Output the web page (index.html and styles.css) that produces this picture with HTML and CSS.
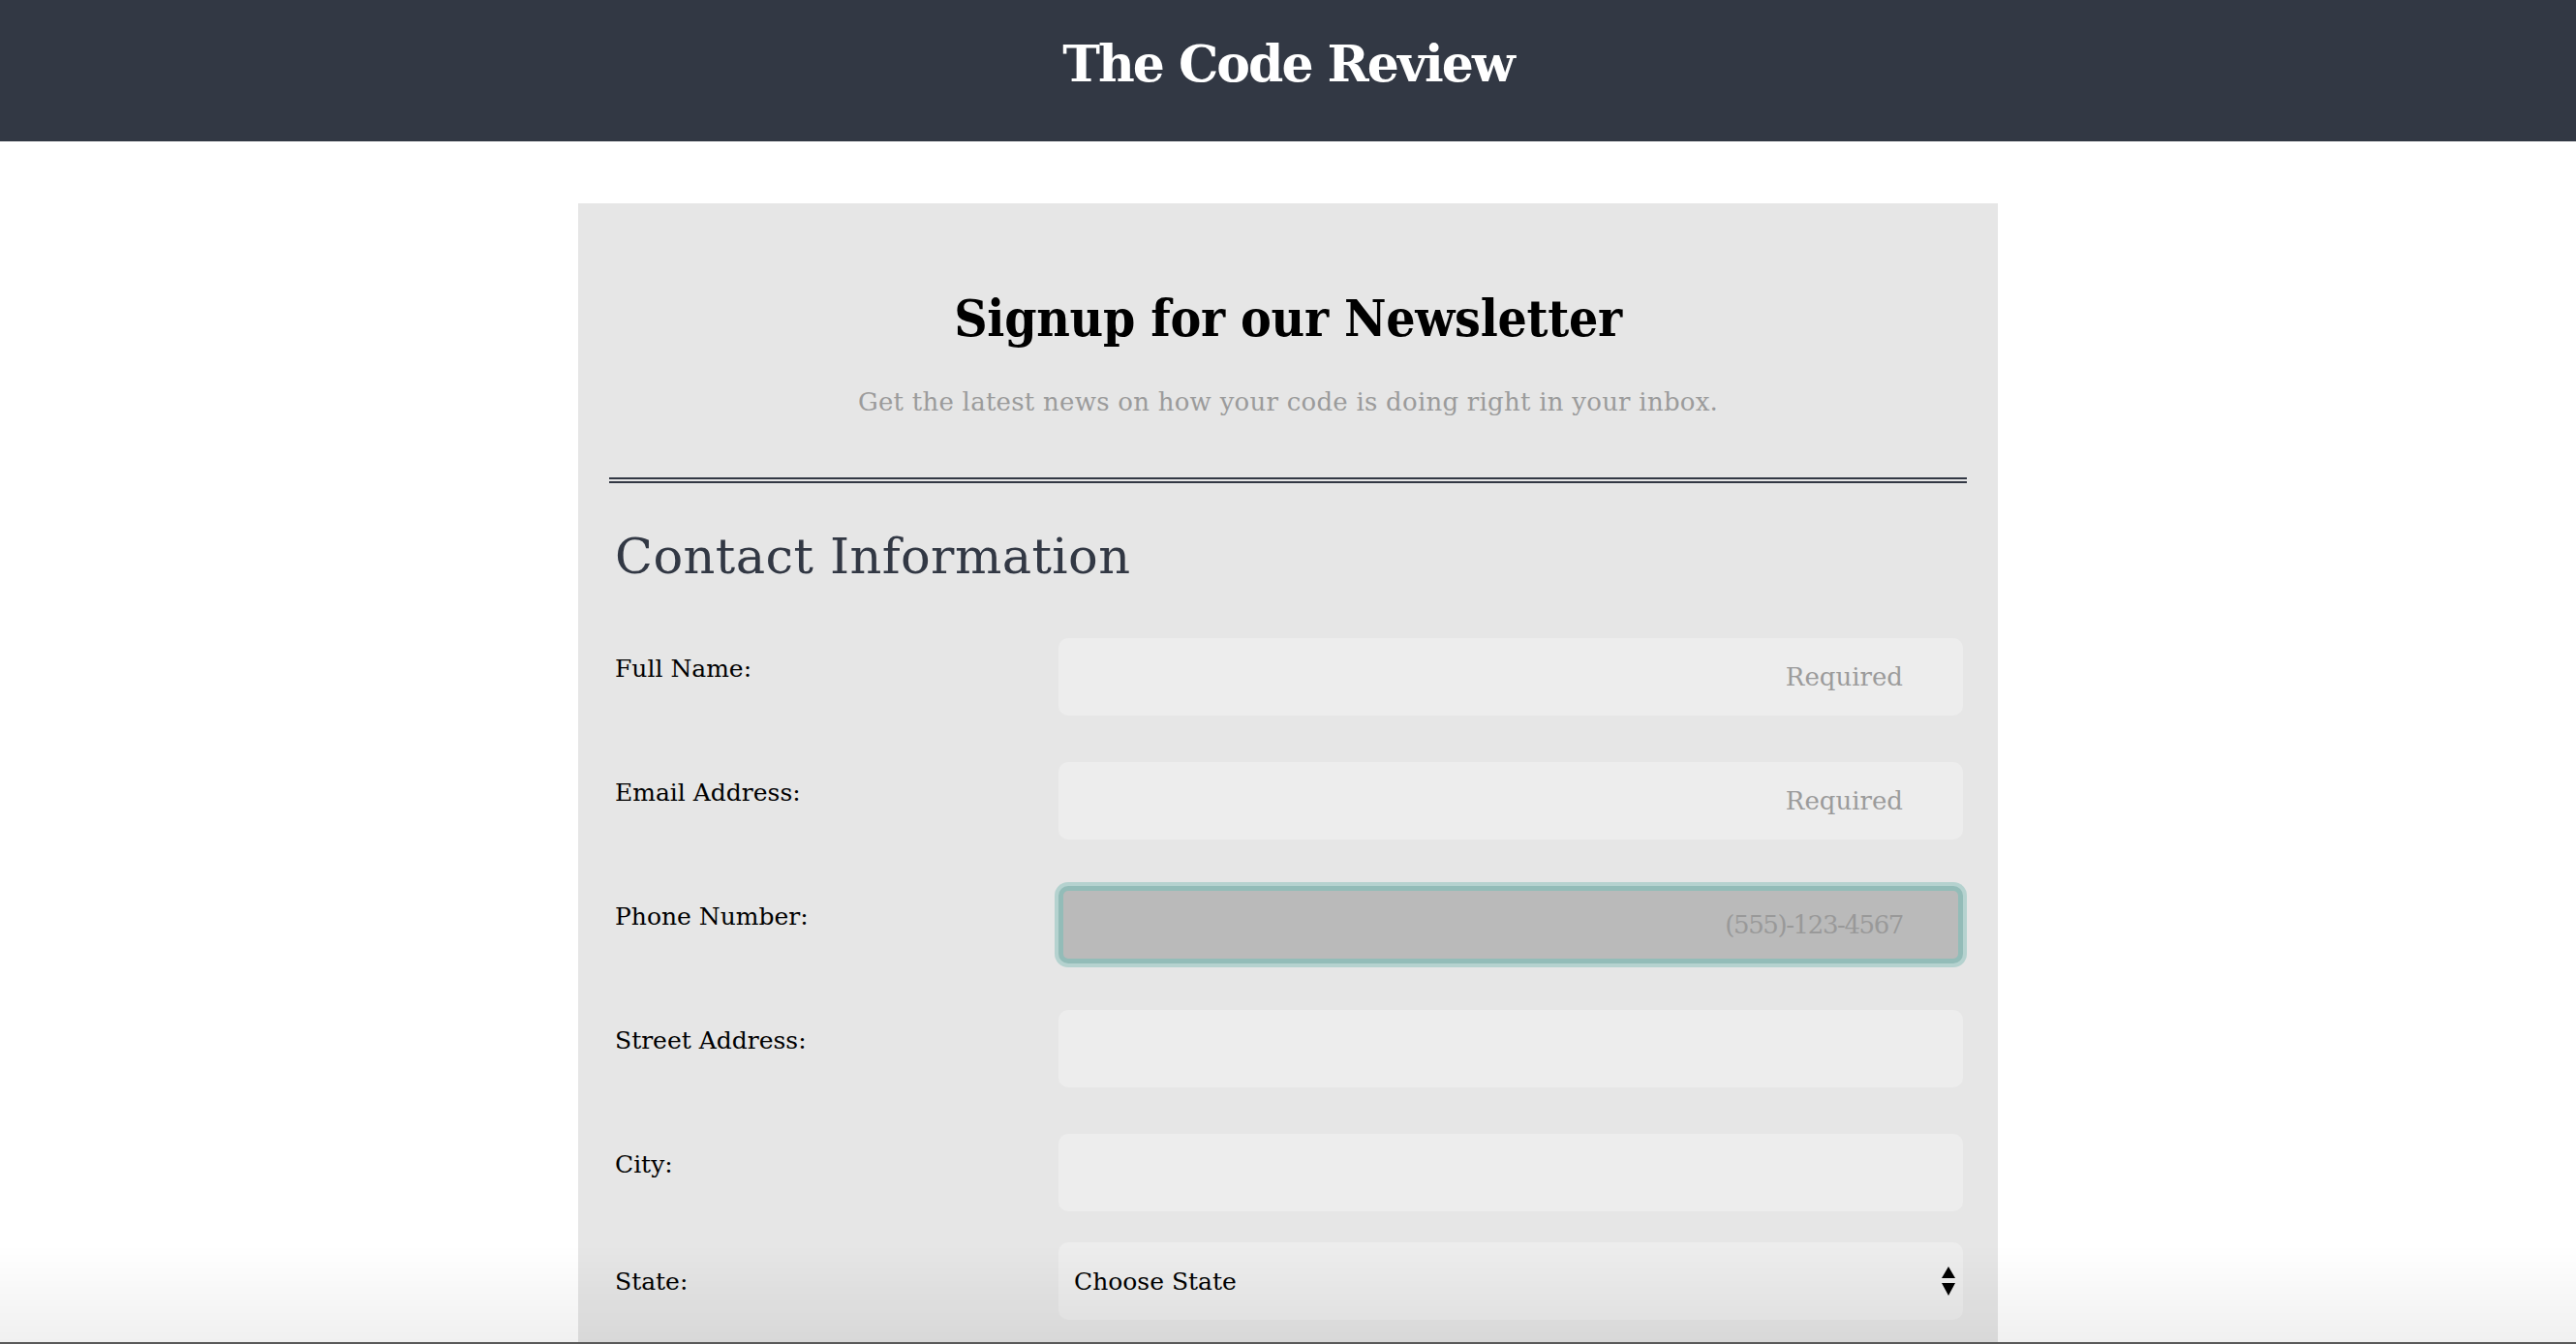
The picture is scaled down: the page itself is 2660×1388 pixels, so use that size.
FILE: index.html
```html
<!DOCTYPE html>
<html lang="en">
<head>
<meta charset="utf-8">
<title>The Code Review</title>
<link rel="stylesheet" href="styles.css">
</head>
<body>
<header class="site-header">
  <h1 class="site-title">The Code Review</h1>
</header>
<main class="card">
  <div class="intro">
    <h2 class="intro-title">Signup for our Newsletter</h2>
    <p class="intro-text">Get the latest news on how your code is doing right in your inbox.</p>
  </div>
  <hr class="divider">
  <form class="form">
    <h3 class="section-title">Contact Information</h3>
    <div class="fields">
      <div class="field">
        <label class="field-label" for="name">Full Name:</label>
        <input class="field-input" id="name" type="text" placeholder="Required">
      </div>
      <div class="field">
        <label class="field-label" for="email">Email Address:</label>
        <input class="field-input" id="email" type="email" placeholder="Required">
      </div>
      <div class="field">
        <label class="field-label" for="phone">Phone Number:</label>
        <input class="field-input is-focused" id="phone" type="tel" placeholder="(555)-123-4567">
      </div>
      <div class="field">
        <label class="field-label" for="street">Street Address:</label>
        <input class="field-input" id="street" type="text">
      </div>
      <div class="field">
        <label class="field-label" for="city">City:</label>
        <input class="field-input" id="city" type="text">
      </div>
      <div class="field field--select">
        <label class="field-label field-label--select" for="state">State:</label>
        <div class="select-wrap">
          <select class="field-select" id="state">
            <option>Choose State</option>
          </select>
          <svg class="select-arrows" viewBox="0 0 14 30" aria-hidden="true">
            <polygon points="7,0 14,12 0,12" fill="#000"/>
            <polygon points="0,17 14,17 7,30" fill="#000"/>
          </svg>
        </div>
      </div>
    </div>
  </form>
</main>
<div class="bottom-shade"></div>
</body>
</html>
```
FILE: styles.css
```css
html, body {
  margin: 0;
  padding: 0;
  background: #ffffff;
  font-family: "DejaVu Serif", "Liberation Serif", serif;
}

.site-header {
  box-sizing: border-box;
  height: 146px;
  padding-top: 40px;
  background: #323844;
  text-align: center;
}

.site-title {
  margin: 0;
  font-size: 52px;
  line-height: 52px;
  font-weight: bold;
  letter-spacing: -2px;
  color: #ffffff;
}

.card {
  box-sizing: border-box;
  width: 1466px;
  margin: 64px auto 0;
  padding: 92px 32px 300px;
  background: #e6e6e6;
}

.intro {
  text-align: center;
}

.intro-title {
  margin: 0;
  font-family: "DejaVu Serif Condensed", "DejaVu Serif", serif;
  font-size: 53px;
  line-height: 53px;
  font-weight: bold;
  letter-spacing: -0.3px;
  color: #000000;
}

.intro-text {
  margin: 47px 0 0;
  font-size: 26px;
  line-height: 26px;
  letter-spacing: 0.25px;
  color: #9b9b9b;
}

.divider {
  height: 0;
  margin: 65px 0 0;
  border: 0;
  border-top: 6px double #323844;
}

.form {
  padding: 0 4px 0 6px;
}

.section-title {
  margin: 50px 0 0;
  font-size: 51px;
  line-height: 51px;
  font-weight: normal;
  letter-spacing: 0.4px;
  color: #323844;
}

.fields {
  margin-top: 59px;
}

.field {
  display: grid;
  grid-template-columns: 458px 1fr;
}

.field + .field {
  margin-top: 48px;
}

.field.field--select {
  margin-top: 32px;
}

.field-label {
  padding-top: 19px;
  font-size: 25px;
  line-height: 25px;
  color: #000000;
}

.field-label--select {
  padding-top: 28px;
}

.field-input {
  box-sizing: border-box;
  width: 100%;
  height: 80px;
  padding: 0 62px 0 16px;
  border: 0;
  border-radius: 10px;
  background: #ededed;
  font-family: inherit;
  font-size: 26px;
  color: #000000;
  text-align: right;
  outline: none;
}

.field-input::placeholder {
  color: #9b9b9b;
  opacity: 1;
}

.field-input.is-focused {
  padding-right: 57px;
  border: 5px solid #93bcb8;
  background: #bababa;
  box-shadow: 0 0 0 4px #b5d2cf;
  letter-spacing: -1.4px;
}

.field-input.is-focused::placeholder {
  color: #999999;
}

.select-wrap {
  position: relative;
}

.field-select {
  box-sizing: border-box;
  width: 100%;
  height: 80px;
  padding: 0 40px 0 16px;
  border: 0;
  border-radius: 10px;
  background: #ededed;
  font-family: inherit;
  font-size: 25px;
  color: #000000;
  -webkit-appearance: none;
  appearance: none;
  outline: none;
}

.select-arrows {
  position: absolute;
  right: 8px;
  top: 25px;
  width: 14px;
  height: 30px;
  pointer-events: none;
}

.bottom-shade {
  position: fixed;
  left: 0;
  right: 0;
  bottom: 0;
  height: 100px;
  background: linear-gradient(to bottom, rgba(0, 0, 0, 0), rgba(0, 0, 0, 0.06));
  border-bottom: 2px solid #5a5a5a;
  pointer-events: none;
}
```
